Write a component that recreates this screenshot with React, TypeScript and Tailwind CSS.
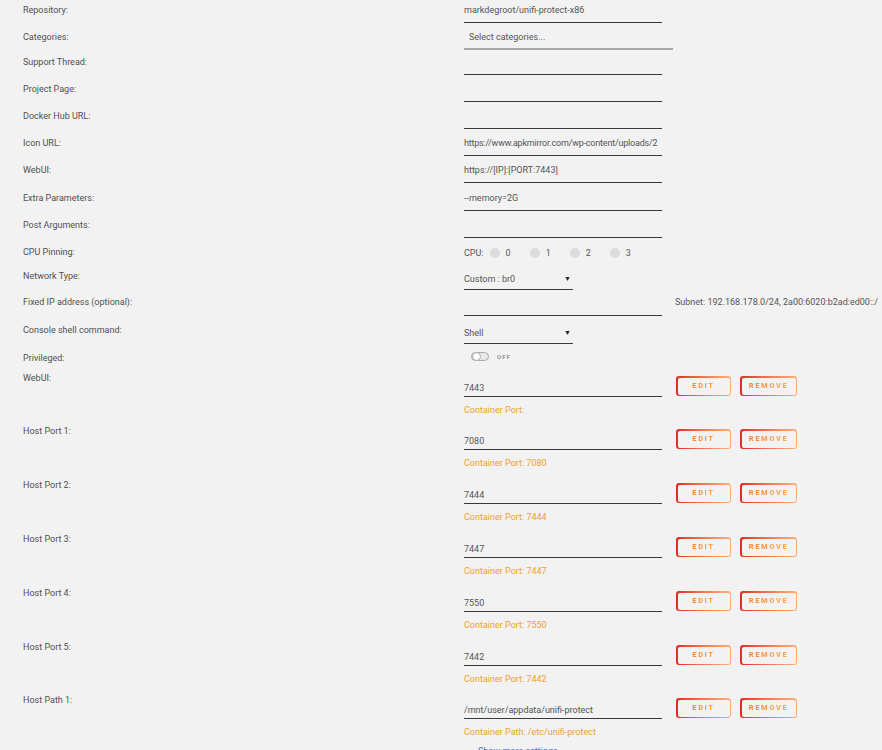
import clsx from 'clsx'

const font = { fontFamily: 'Roboto, "Liberation Sans", sans-serif' }

type Simple = { label: string; value?: string; h: string; tight?: boolean }

const textRows: Simple[] = [
  { label: 'Support Thread:', h: 'h-[27px]' },
  { label: 'Project Page:', h: 'h-[27px]' },
  { label: 'Docker Hub URL:', h: 'h-[27px]' },
  { label: 'Icon URL:', value: 'https://www.apkmirror.com/wp-content/uploads/2', h: 'h-[27px]', tight: true },
  { label: 'WebUI:', value: 'https://[IP]:[PORT:7443]', h: 'h-[28px]' },
  { label: 'Extra Parameters:', value: '--memory=2G', h: 'h-[27px]' },
  { label: 'Post Arguments:', h: 'h-[27px]' },
]

const ports = [
  { label: 'WebUI:', value: '7443', note: 'Container Port:', h: 'h-[53px]' },
  { label: 'Host Port 1:', value: '7080', note: 'Container Port: 7080', h: 'h-[54px]' },
  { label: 'Host Port 2:', value: '7444', note: 'Container Port: 7444', h: 'h-[54px]' },
  { label: 'Host Port 3:', value: '7447', note: 'Container Port: 7447', h: 'h-[54px]' },
  { label: 'Host Port 4:', value: '7550', note: 'Container Port: 7550', h: 'h-[54px]' },
  { label: 'Host Port 5:', value: '7442', note: 'Container Port: 7442', h: 'h-[53px]' },
  {
    label: 'Host Path 1:',
    value: '/mnt/user/appdata/unifi-protect',
    note: 'Container Path: /etc/unifi-protect',
    h: 'h-[54px]',
  },
]

const Label = ({ children }: { children: React.ReactNode }) => (
  <div className="w-[441px] shrink-0 pt-[3px] text-[9px] leading-[12px] text-[#505050]">{children}</div>
)

const Field = ({ value, h = 'h-[19px]', className }: { value?: string; h?: string; className?: string }) => (
  <div
    className={clsx(
      'w-[198px] overflow-hidden border-b border-[#3a3a3a] text-[9px] leading-[12px] whitespace-nowrap text-[#555]',
      h,
      className,
    )}
  >
    {value}
  </div>
)

const Row = ({ label, h, children }: { label: string; h: string; children?: React.ReactNode }) => (
  <div className={clsx('flex', h)}>
    <Label>{label}</Label>
    <div className="flex items-start pt-[3px]">{children}</div>
  </div>
)

const GradButton = ({ text, w }: { text: string; w: string }) => (
  <div className={clsx('rounded-[3px] bg-gradient-to-r from-[#e22828] to-[#ffb078] p-[1.5px]', w)}>
    <div className="flex h-[17px] items-center justify-center rounded-[2px] bg-[#f2f2f2]">
      <span className="bg-gradient-to-r from-[#f5883a] to-[#ffa858] bg-clip-text text-[7.5px] font-extrabold tracking-[1.6px] text-transparent">
        {text}
      </span>
    </div>
  </div>
)

const Select = ({ value }: { value: string }) => (
  <div className="flex h-[20px] w-[109px] items-start justify-between border-b border-[#3a3a3a] pt-[3px] text-[9px] leading-[12px] text-[#555]">
    <span>{value}</span>
    <span className="pr-[2px] text-[7px] leading-[12px] text-[#222]">▼</span>
  </div>
)

export default function App() {
  return (
    <div className="min-h-screen bg-[#f2f2f2] pt-[1px] pl-[23px]" style={font}>
      <Row label="Repository:" h="h-[27px]">
        <Field value="markdegroot/unifi-protect-x86" />
      </Row>
      <Row label="Categories:" h="h-[25px]">
        <div className="h-[19px] w-[209px] border-b-2 border-[#a8a8a8] pl-[5px] text-[9px] leading-[12px] text-[#555]">
          Select categories...
        </div>
      </Row>
      {textRows.map((r) => (
        <Row key={r.label} label={r.label} h={r.h}>
          <Field value={r.value} className={r.tight ? 'tracking-[-0.2px]' : undefined} />
        </Row>
      ))}
      <Row label="CPU Pinning:" h="h-[24px]">
        <div className="flex items-center pt-[1px] text-[9px] leading-[12px] text-[#555]">
          <span className="mr-[6px]">CPU:</span>
          {['0', '1', '2', '3'].map((c) => (
            <span key={c} className="mr-[19px] flex items-center gap-[6px]">
              <span className="inline-block h-[10px] w-[10px] rounded-full bg-[#dcdcdc]" />
              {c}
            </span>
          ))}
        </div>
      </Row>
      <Row label="Network Type:" h="h-[26px]">
        <Select value="Custom : br0" />
      </Row>
      <Row label="Fixed IP address (optional):" h="h-[28px]">
        <Field h="h-[20px]" />
        <span className="ml-[13px] text-[9px] leading-[12px] whitespace-nowrap text-[#555]">
          Subnet: 192.168.178.0/24, 2a00:6020:b2ad:ed00::/
        </span>
      </Row>
      <Row label="Console shell command:" h="h-[28px]">
        <Select value="Shell" />
      </Row>
      <Row label="Privileged:" h="h-[20px]">
        <div className="flex items-center gap-[8px] pl-[7px]">
          <span className="flex h-[9px] w-[18px] items-center rounded-full border border-[#aaa] bg-[#e8e8e8]">
            <span className="h-[9px] w-[9px] rounded-full border border-[#aaa] bg-white" />
          </span>
          <span className="text-[6px] tracking-[1px] text-[#666]">OFF</span>
        </div>
      </Row>
      {ports.map((p) => (
        <div key={p.label} className={clsx('flex', p.h)}>
          <Label>{p.label}</Label>
          <div className="pt-[3px]">
            <div className="flex items-start">
              <Field value={p.value} h="h-[15px]" className="mt-[10px]" />
              <div className="mt-[4px] ml-[14px] flex gap-[9px]">
                <GradButton text="EDIT" w="w-[55px]" />
                <GradButton text="REMOVE" w="w-[57px]" />
              </div>
            </div>
            <div className="mt-[7px] text-[9px] leading-[12px] text-[#f0a030]">{p.note}</div>
          </div>
        </div>
      ))}
      <div className="pl-[455px] text-[9px] text-[#4a6fd0]">Show more settings ...</div>
    </div>
  )
}
